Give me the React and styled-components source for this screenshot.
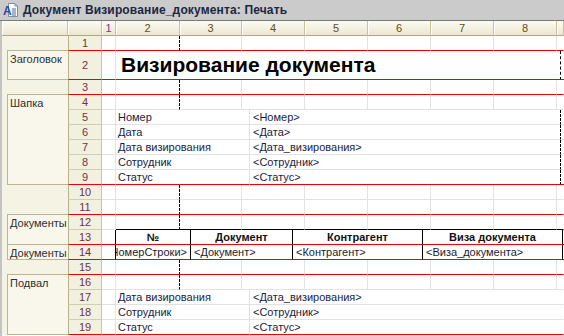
import React from 'react';
import styled, { createGlobalStyle } from 'styled-components';

const Global = createGlobalStyle`
  html, body { margin: 0; padding: 0; background: #fff; }
  body { font-family: "Liberation Sans", Arial, sans-serif; overflow: hidden; }
`;

const RED = '#ee0000';
const GRID = '#e2e2e2';
const TAN = '#d3cdaf';

const Window = styled.div`
  width: 564px;
  height: 336px;
  overflow: hidden;
  display: flex;
  flex-direction: column;
  background: #fff;
`;

const TitleBar = styled.div`
  height: 20px;
  flex: none;
  display: flex;
  align-items: center;
  gap: 4px;
  padding-left: 3px;
  background: #cbcbcb;
  border-bottom: 1px solid #7a7a7a;
  font-weight: bold;
  font-size: 12px;
  letter-spacing: 0.15px;
  color: #1b2741;
  white-space: nowrap;
`;

const Sheet = styled.div`
  display: flex;
  flex-direction: column;
  border-left: 2px solid #c4c4c4;
  flex: 1;
  min-height: 0;
`;

const HeaderRow = styled.div`
  display: flex;
  height: 15px;
  flex: none;
`;

const HeadCell = styled.div`
  width: ${(p) => p.$w}px;
  flex: none;
  box-sizing: border-box;
  height: 15px;
  border-right: 1px solid #c9c2a0;
  border-bottom: 1px solid #aea681;
  background: linear-gradient(#fcfbf2, #ebe7d1);
  box-shadow: inset 1px 0 0 #fffef8;
  display: flex;
  align-items: center;
  justify-content: center;
  font-size: 11px;
  color: ${(p) => (p.$accent ? '#8b2f8b' : '#5d4e1c')};
`;

const Body = styled.div`
  display: flex;
  flex: none;
`;

const Margin = styled.div`
  width: 66px;
  flex: none;
  display: grid;
  grid-template-rows: 15px 29px 15px repeat(16, 15px);
  background: #f5f3e3;
`;

const GroupBox = styled.div`
  grid-row: ${(p) => p.$from} / ${(p) => p.$to + 1};
  margin-left: 5px;
  margin-top: -1px;
  border: 1px solid #bdb591;
  border-right: none;
  background: #f9f7eb;
  font-size: 11px;
  color: #2d2d2d;
  padding: 2px 0 0 2px;
  white-space: nowrap;
  overflow: hidden;
  line-height: 13px;
`;

const Rows = styled.div`
  display: flex;
  flex-direction: column;
  width: 496px;
  flex: none;
`;

const Row = styled.div`
  display: flex;
  height: ${(p) => p.$h}px;
  flex: none;
`;

const RowNum = styled.div`
  width: 34px;
  flex: none;
  box-sizing: border-box;
  border-left: 1px solid #b9b18d;
  border-right: 1px solid #cbc4a2;
  border-bottom: 1px solid ${(p) => (p.$red ? RED : TAN)};
  background: #f2f0df;
  display: flex;
  align-items: center;
  justify-content: center;
  font-size: 11px;
  color: #6d3448;
`;

const rightBorder = {
  gray: `1px solid ${GRID}`,
  dash: '1px dashed #000',
  black: '1px solid #000',
  none: '1px solid transparent',
};

const Cell = styled.div`
  width: ${(p) => p.$w}px;
  flex: none;
  box-sizing: border-box;
  border-right: ${(p) => rightBorder[p.$r || 'gray']};
  border-bottom: 1px solid ${(p) => p.$b || GRID};
  display: flex;
  align-items: center;
  justify-content: ${(p) => p.$align || 'flex-start'};
  padding: 0 ${(p) => p.$pad ?? 2}px;
  overflow: hidden;
  white-space: nowrap;
  font-size: ${(p) => p.$size || 11}px;
  font-weight: ${(p) => (p.$bold ? 'bold' : 'normal')};
  color: ${(p) => p.$color || '#1c1c3c'};
`;

const COLS = [14, 64, 62, 63, 63, 63, 63, 63, 7];

function StdCells({ dash, bottom, blackBelow }) {
  return COLS.map((w, i) => (
    <Cell
      key={i}
      $w={w}
      $r={i === 1 && dash ? 'dash' : i === COLS.length - 1 ? 'none' : 'gray'}
      $b={bottom || (blackBelow && i > 0 ? '#000' : undefined)}
    />
  ));
}

function PairCells({ a, b, dash, bottom }) {
  return (
    <>
      <Cell $w={14} $b={bottom} />
      <Cell $w={134} $b={bottom}>{a}</Cell>
      <Cell $w={dash ? 311 : 314} $r={dash ? 'dash' : 'none'} $b={bottom} $pad={3}>
        {b}
      </Cell>
      {dash && <Cell $w={3} $r="none" $b={bottom} />}
    </>
  );
}

const TABLE = [
  { w: 75, head: '№', val: '<НомерСтроки>', end: true },
  { w: 102, head: 'Документ', val: '<Документ>' },
  { w: 130, head: 'Контрагент', val: '<Контрагент>' },
  { w: 140, head: 'Виза документа', val: '<Виза_документа>' },
];

function TableCells({ header, bottom }) {
  return (
    <>
      <Cell $w={14} $r="black" $b={bottom} />
      {TABLE.map((c, i) => (
        <Cell
          key={i}
          $w={c.w}
          $r="black"
          $b={bottom}
          $bold={header}
          $color={header ? '#111' : '#1c1c2c'}
          $align={header ? 'center' : c.end ? 'flex-end' : 'flex-start'}
          $pad={header ? 0 : 3}
        >
          {header ? c.head : c.val}
        </Cell>
      ))}
      <Cell $w={1} $r="none" $b={bottom} />
    </>
  );
}

const ROWS = [
  { n: 1, h: 15, red: true, kind: 'std', dash: true },
  { n: 2, h: 29, red: true, kind: 'title' },
  { n: 3, red: true, kind: 'std', dash: true },
  { n: 4, kind: 'std', dash: true },
  { n: 5, kind: 'pair', a: 'Номер', b: '<Номер>', dash: true },
  { n: 6, kind: 'pair', a: 'Дата', b: '<Дата>', dash: true },
  { n: 7, kind: 'pair', a: 'Дата визирования', b: '<Дата_визирования>', dash: true },
  { n: 8, kind: 'pair', a: 'Сотрудник', b: '<Сотрудник>', dash: true },
  { n: 9, kind: 'pair', a: 'Статус', b: '<Статус>', dash: true, red: true },
  { n: 10, kind: 'std', dash: true },
  { n: 11, kind: 'std', dash: true, red: true },
  { n: 12, kind: 'std', dash: true, blackBelow: true },
  { n: 13, kind: 'thead', red: true },
  { n: 14, kind: 'trow', red: true },
  { n: 15, kind: 'std', dash: true, red: true },
  { n: 16, kind: 'std', dash: true },
  { n: 17, kind: 'pair', a: 'Дата визирования', b: '<Дата_визирования>' },
  { n: 18, kind: 'pair', a: 'Сотрудник', b: '<Сотрудник>' },
  { n: 19, kind: 'pair', a: 'Статус', b: '<Статус>', red: true },
];

const GROUPS = [
  { from: 2, to: 2, label: 'Заголовок' },
  { from: 4, to: 9, label: 'Шапка' },
  { from: 12, to: 13, label: 'Документы' },
  { from: 14, to: 14, label: 'Документы' },
  { from: 16, to: 19, label: 'Подвал' },
];

function RowCells({ row }) {
  const bottom = row.red ? RED : undefined;
  switch (row.kind) {
    case 'title':
      return (
        <>
          <Cell $w={14} $b={bottom} />
          <Cell $w={445} $r="dash" $b={bottom} $size={21} $bold $color="#000" $pad={5}>
            Визирование документа
          </Cell>
          <Cell $w={3} $r="none" $b={bottom} />
        </>
      );
    case 'pair':
      return <PairCells a={row.a} b={row.b} dash={row.dash} bottom={bottom} />;
    case 'thead':
      return <TableCells header bottom={bottom} />;
    case 'trow':
      return <TableCells bottom={bottom} />;
    default:
      return <StdCells dash={row.dash} bottom={bottom} blackBelow={row.blackBelow} />;
  }
}

const DocIcon = () => (
  <svg width="16" height="16" viewBox="0 0 16 16">
    <path d="M5.5 1.5h6.5l2.5 2.5v10.5h-9z" fill="#fdfdfd" stroke="#7f8ca3" />
    <path d="M12 1.5v2.5h2.5" fill="none" stroke="#7f8ca3" />
    <path d="M9 7h4M9 9h4M9 11h4M9 13h4" stroke="#55688f" />
    <text x="0" y="13" fontSize="12" fontWeight="bold" fill="#1f4fa8" fontFamily="Liberation Sans, Arial, sans-serif">
      A
    </text>
  </svg>
);

export default function App() {
  return (
    <>
      <Global />
      <Window>
        <TitleBar>
          <DocIcon />
          <span>Документ Визирование_документа: Печать</span>
        </TitleBar>
        <Sheet>
          <HeaderRow>
            <HeadCell $w={66} />
            <HeadCell $w={34} />
            {COLS.map((w, i) => (
              <HeadCell key={i} $w={w} $accent={i === 0}>
                {i < 8 ? i + 1 : ''}
              </HeadCell>
            ))}
          </HeaderRow>
          <Body>
            <Margin>
              {GROUPS.map((g) => (
                <GroupBox key={g.from} $from={g.from} $to={g.to}>
                  {g.label}
                </GroupBox>
              ))}
            </Margin>
            <Rows>
              {ROWS.map((r) => (
                <Row key={r.n} $h={r.h || 15}>
                  <RowNum $red={r.red}>{r.n}</RowNum>
                  <RowCells row={r} />
                </Row>
              ))}
            </Rows>
          </Body>
        </Sheet>
      </Window>
    </>
  );
}
